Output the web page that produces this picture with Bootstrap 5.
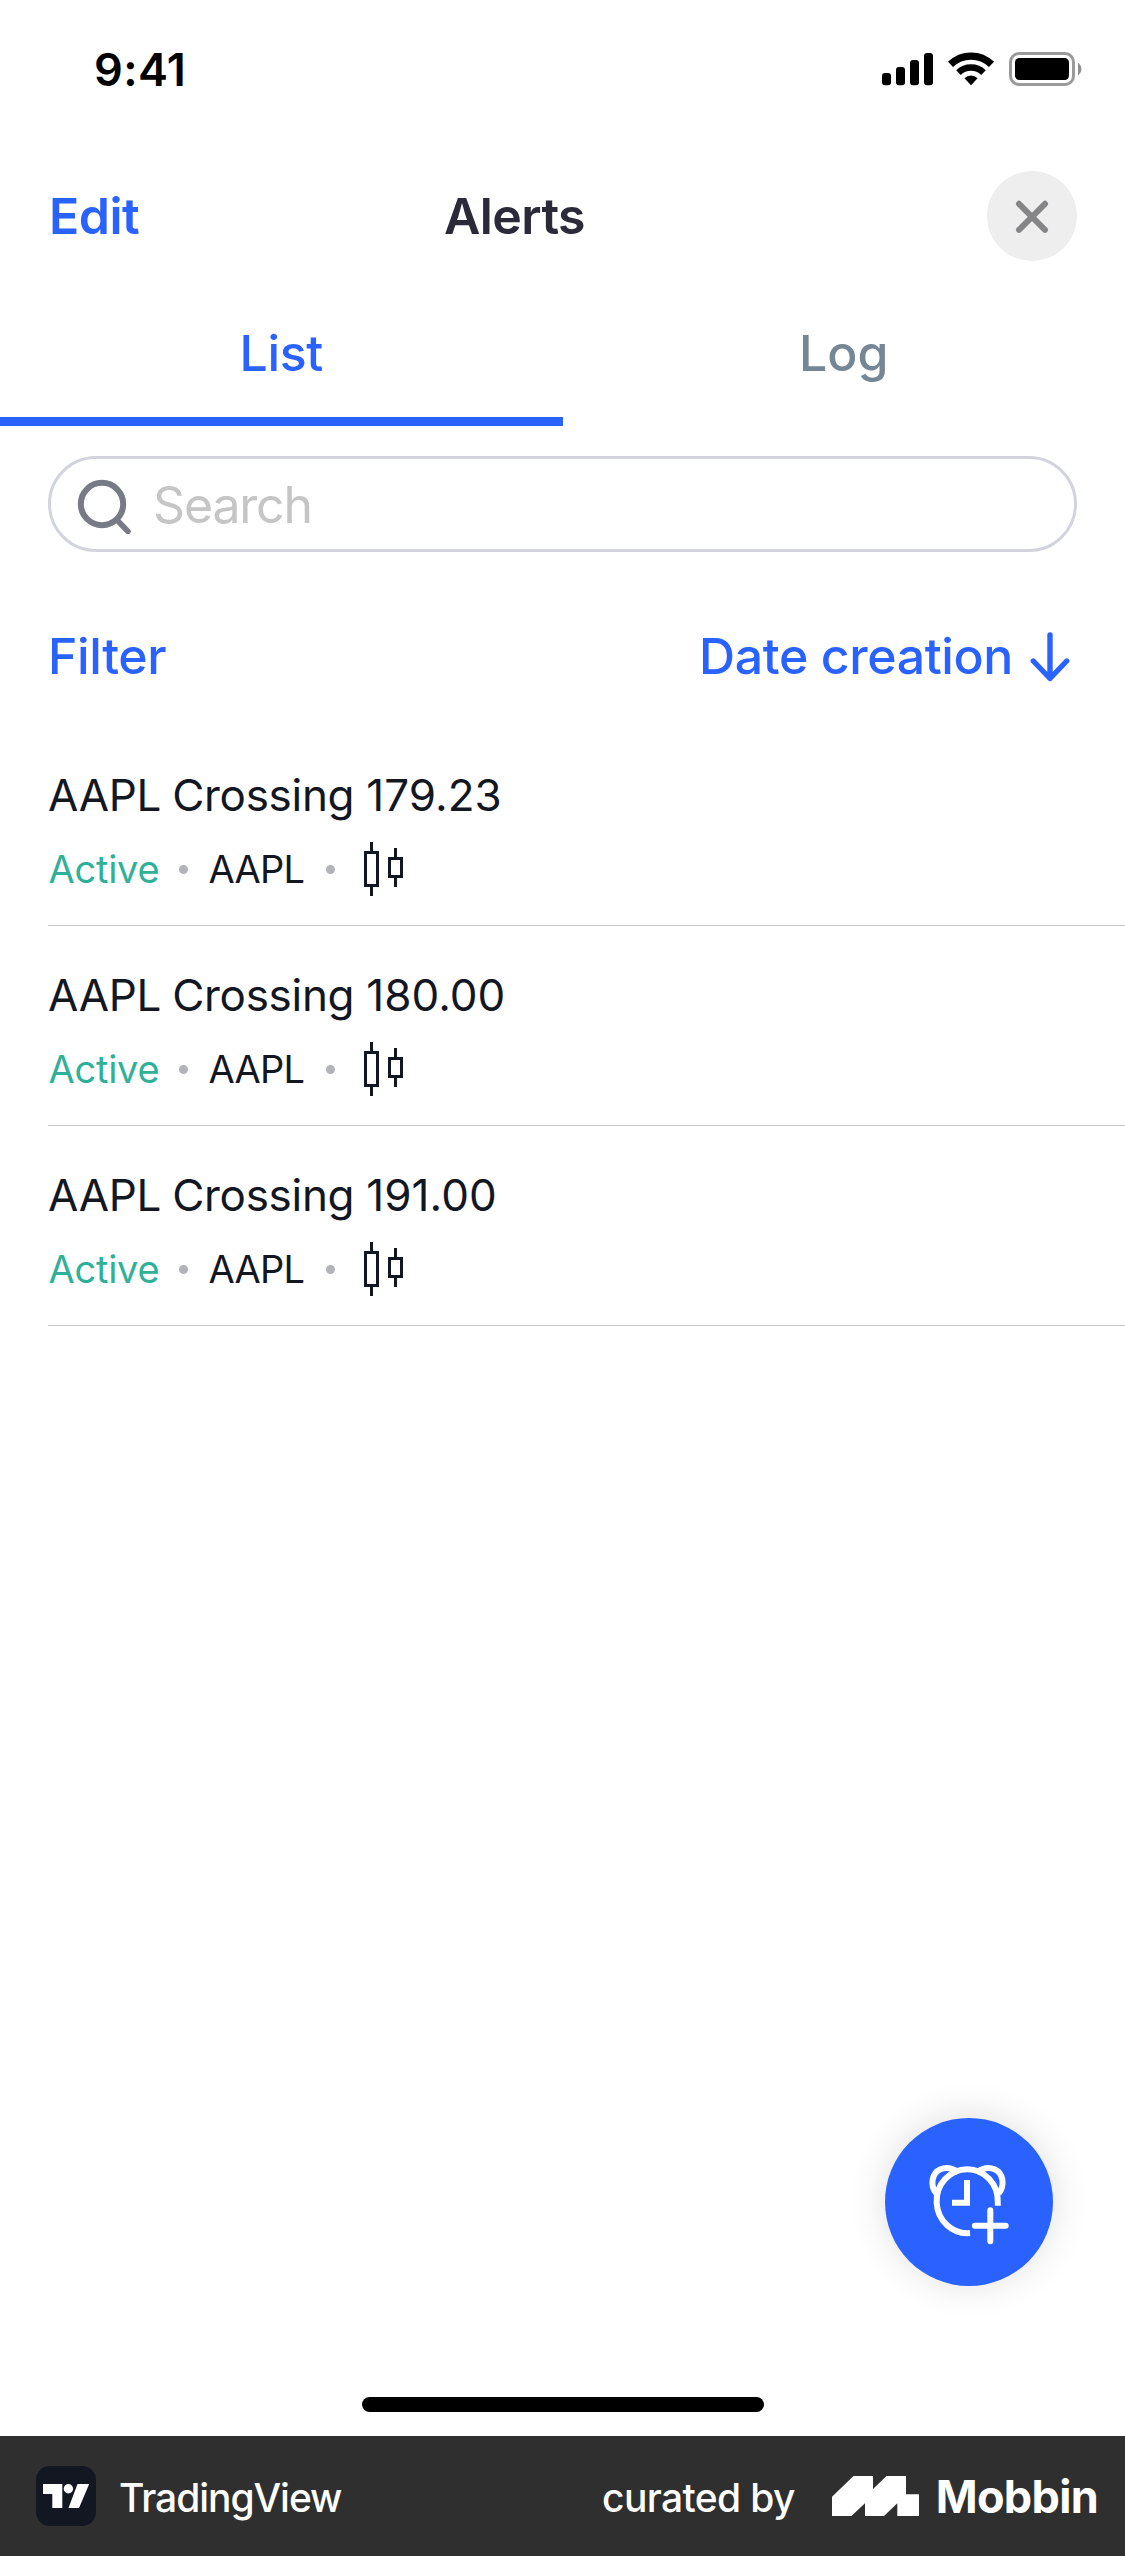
<!DOCTYPE html>
<html lang="en">
<head>
<meta charset="utf-8">
<meta name="viewport" content="width=device-width, initial-scale=1">
<title>Alerts</title>
<link href="https://cdn.jsdelivr.net/npm/bootstrap@5.3.0/dist/css/bootstrap.min.css" rel="stylesheet">
<style>
  :root { --tv-blue: #2962ff; --tv-ink: #131722; }
  body { font-family: "Inter", sans-serif; color: var(--tv-ink); background: #fff; font-kerning: normal; }
  svg { display: block; flex: none; }
  .screen { height: 2556px; }
  .status-bar { height: 138px; padding: 0 43px 0 94px; color: #000; }
  .clock { font-size: 45px; font-weight: 600; letter-spacing: .4px; line-height: 1; }
  .title-bar { height: 156px; padding: 0 48px; font-size: 50px; font-weight: 600; }
  .edit-link { width: 396px; color: var(--tv-blue); letter-spacing: -.5px; text-decoration: none; padding-left: 1px; }
  .page-title { font-size: 50px; font-weight: 600; letter-spacing: -.6px; color: #2a2a39; }
  .close-btn { width: 90px; height: 90px; background: #eee; border: 0; }
  .tab-row .nav-link { height: 132px; padding: 0 0 5px; line-height: 118px; font-size: 50px; font-weight: 500; color: #758696; border-radius: 0; border-bottom: 9px solid transparent; }
  .tab-row .nav-link.active { color: var(--tv-blue); border-bottom-color: var(--tv-blue); letter-spacing: -.27px; }
  .search-box { height: 96px; margin: 30px 48px 0; border: 3px solid #d1d4dc; border-radius: 48px; padding-left: 24px; }
  .search-box input { font-size: 50px; letter-spacing: -1.17px; line-height: 60px; padding: 0; margin: 1px 0 0 18px; }
  .search-box input::placeholder { color: #c5c5c5; opacity: 1; }
  .tool-row { height: 174px; padding: 34px 54px 0 48px; font-size: 50px; font-weight: 500; color: var(--tv-blue); }
  .tool-row .sort { letter-spacing: -.4px; gap: 16px; }
  .tool-row .filter { letter-spacing: -.4px; }
  .alert-item { height: 200px; margin-left: 48px; padding-top: 42px; border-bottom: 1px solid #c4c4c6; }
  .alert-name { font-size: 44px; line-height: 54px; letter-spacing: -.3px; word-spacing: -1px; margin-bottom: 20px; }
  .price { letter-spacing: .04px; margin-left: 1px; }
  .alert-meta { font-size: 38px; line-height: 54px; height: 54px; padding-left: .5px; }
  .state { color: #2fb199; letter-spacing: -.24px; }
  .sym { letter-spacing: -.75px; }
  .sep { width: 9px; height: 9px; border-radius: 50%; background: #b2b3b9; margin: 0 20px 0 20px; }
  .sep-end { margin: 0 28.5px 0 22px; }
  .fab { position: absolute; left: 885px; top: 2118px; width: 168px; height: 168px; border: 0; background: var(--tv-blue); box-shadow: 0 -2px 38px rgba(0,0,0,.13); }
  .home-bar { width: 402px; height: 15px; border-radius: 8px; background: #000; margin: 0 auto 24px; }
  .credit { height: 120px; background: #2f2f2f; color: #fff; font-size: 39px; font-weight: 500; padding: 0 27px 0 36px; }
  .credit-text { padding-top: 4px; }
  .app-name { letter-spacing: -1.05px; margin-left: 23px; }
  .by { letter-spacing: -.65px; margin-right: 37px; }
  .brand-name { font-size: 45px; font-weight: 700; letter-spacing: -.69px; margin-left: 17px; padding-top: 2px; }
</style>
</head>
<body>
<div class="screen position-relative d-flex flex-column overflow-hidden">

  <div class="status-bar d-flex align-items-center justify-content-between">
    <div class="clock">9:41</div>
    <svg width="200" height="34" viewBox="882 52 200 34">
      <rect x="882" y="73" width="9" height="12.300" rx="3"/>
      <rect x="896" y="67" width="9" height="18.300" rx="3"/>
      <rect x="910" y="60" width="9" height="25.300" rx="3"/>
      <rect x="924" y="53" width="9" height="32.300" rx="3"/>
      <g fill="none" stroke="#000">
        <path d="M950.500 64.400a29.300 29.300 0 0 1 41 0" stroke-width="7.300"/>
        <path d="M958.500 72.600a18 18 0 0 1 25 0" stroke-width="6.600"/>
      </g>
      <path d="M971 85.200L964.400 78.200a9.400 9.400 0 0 1 13.200 0z"/>
      <rect x="1010.500" y="53.500" width="63" height="31" rx="8.500" fill="none" stroke="#9a9a9a" stroke-width="3"/>
      <rect x="1015" y="58" width="54" height="22" rx="4.500"/>
      <path d="M1078 62.800a7.300 7.300 0 0 1 0 12.400z" fill="#8f8f8f"/>
    </svg>
  </div>

  <header class="title-bar d-flex align-items-center">
    <a href="#" class="edit-link">Edit</a>
    <h1 class="page-title m-0">Alerts</h1>
    <button class="close-btn rounded-circle ms-auto d-flex align-items-center justify-content-center p-0" type="button" aria-label="Close">
      <svg width="36" height="36" viewBox="0 0 36 36" fill="none" stroke="#858587" stroke-width="6" stroke-linecap="round"><path d="M5 5.800L31 31.800M31 5.800L5 31.800"/></svg>
    </button>
  </header>

  <nav class="tab-row nav nav-fill flex-nowrap">
    <a class="nav-link active w-50" href="#">List</a>
    <a class="nav-link w-50" href="#">Log</a>
  </nav>

  <div class="search-box d-flex align-items-center">
    <svg width="60" height="60" viewBox="0 0 60 60" fill="none" stroke="#787b86" stroke-width="6"><circle cx="27" cy="30" r="21.200"/><path d="M42.500 46.500L53 57.500" stroke-width="5.500" stroke-linecap="round"/></svg>
    <input class="form-control border-0 bg-transparent shadow-none" type="text" placeholder="Search">
  </div>

  <div class="tool-row d-flex align-items-center justify-content-between">
    <span class="filter">Filter</span>
    <span class="sort d-flex align-items-center">Date creation
      <svg width="42" height="52" viewBox="0 0 42 52" fill="none" stroke="#2962ff" stroke-width="5.400" stroke-linecap="round" stroke-linejoin="round"><path d="M21 5v43M4.300 31L21 48.500L37.700 31"/></svg>
    </span>
  </div>

  <svg class="d-none">
    <symbol id="candles" viewBox="0 0 39 54"><g fill="none" stroke="#131722" stroke-width="3"><path d="M1.500 10.500h12v33h-12zM7.500 0v10M7.500 44v10M25.500 16.500h12v18h-12zM31.500 6v10M31.500 35v10"/></g></symbol>
  </svg>

  <div class="alert-item">
    <div class="alert-name">AAPL Crossing <span class="price">179.23</span></div>
    <div class="alert-meta d-flex align-items-center"><span class="state">Active</span><i class="sep"></i><span class="sym">AAPL</span><i class="sep sep-end"></i><svg width="39" height="54"><use href="#candles"/></svg></div>
  </div>
  <div class="alert-item">
    <div class="alert-name">AAPL Crossing <span class="price">180.00</span></div>
    <div class="alert-meta d-flex align-items-center"><span class="state">Active</span><i class="sep"></i><span class="sym">AAPL</span><i class="sep sep-end"></i><svg width="39" height="54"><use href="#candles"/></svg></div>
  </div>
  <div class="alert-item">
    <div class="alert-name">AAPL Crossing <span class="price">191.00</span></div>
    <div class="alert-meta d-flex align-items-center"><span class="state">Active</span><i class="sep"></i><span class="sym">AAPL</span><i class="sep sep-end"></i><svg width="39" height="54"><use href="#candles"/></svg></div>
  </div>

  <button class="fab rounded-circle p-0" type="button" aria-label="Create alert">
    <svg width="168" height="168" viewBox="25 28 168 168" fill="none" stroke="#fff" stroke-width="6">
      <path d="M137.800 115.700V112.500A30.600 32 0 1 0 110 143"/>
      <path d="M76.300 103.500C69.500 95 72 83 80.500 79.300C87 76.600 93 78.500 98.500 82.500"/>
      <path d="M138.700 103.500C145.500 95 143 83 134.500 79.300C128 76.600 122 78.500 116.500 82.500"/>
      <path d="M107 90v22.800H92"/>
      <path d="M130.300 120.200v31M114.900 135.700h30.800" stroke-linecap="round"/>
    </svg>
  </button>

  <div class="mt-auto">
    <div class="home-bar"></div>
    <footer class="credit d-flex align-items-center">
      <svg width="60" height="60" viewBox="0 0 60 60"><rect width="60" height="60" rx="14" fill="#131722"/><path fill="#fff" d="M7 18h19.300v24h-10V28H7zM41.500 18h11.700L43 42H32.500z"/><circle cx="32.400" cy="22.700" r="4.700" fill="#fff"/></svg>
      <span class="credit-text app-name">TradingView</span>
      <span class="credit-text by ms-auto">curated by</span>
      <svg width="87" height="40" viewBox="0 0 87 40" fill="#fff"><path d="M0 20.700L21.500 0H41V13L54.500 0H74V18.300H87V40H65.300V27.300L52 40H33V27.300L19.400 40H0z"/></svg>
      <span class="brand-name">Mobbin</span>
    </footer>
  </div>
</div>
<script src="https://cdn.jsdelivr.net/npm/bootstrap@5.3.0/dist/js/bootstrap.bundle.min.js"></script>
</body>
</html>
